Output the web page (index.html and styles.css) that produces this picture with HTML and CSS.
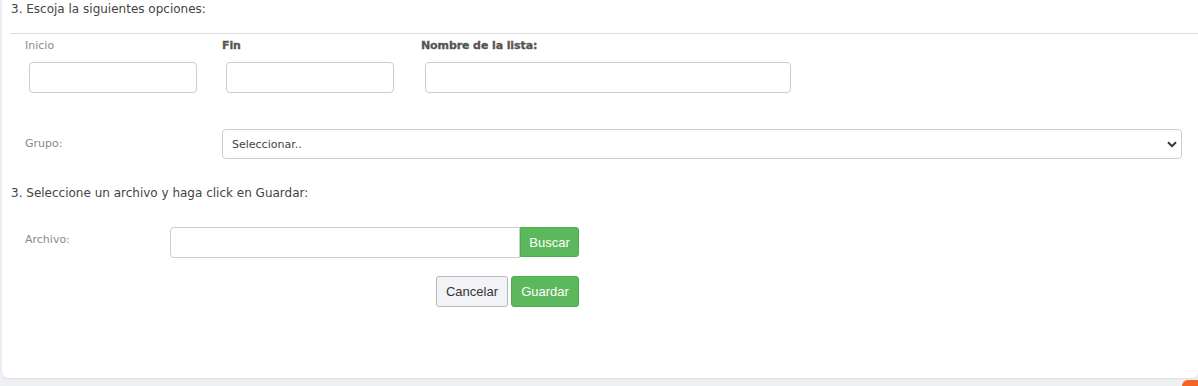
FILE: index.html
```html
<!DOCTYPE html>
<html lang="es">
<head>
    <meta charset="UTF-8">
    <meta name="viewport" content="width=device-width, initial-scale=1.0">
    <title>Cargar lista</title>
    <link rel="stylesheet" href="styles.css">
</head>
<body>
    <div class="card">
        <p class="step">3. Escoja la siguientes opciones:</p>
        <hr class="divider">

        <div class="fields">
            <div class="field">
                <label for="inicio" class="lbl">Inicio</label>
                <input type="text" id="inicio" class="box small">
            </div>
            <div class="field">
                <label for="fin" class="lbl strong">Fin</label>
                <input type="text" id="fin" class="box small">
            </div>
            <div class="field">
                <label for="nombre" class="lbl strong">Nombre de la lista:</label>
                <input type="text" id="nombre" class="box wide">
            </div>
        </div>

        <div class="row group-row">
            <label for="grupo" class="lbl row-lbl">Grupo:</label>
            <div class="select-wrap">
                <select id="grupo" class="box select">
                    <option>Seleccionar..</option>
                </select>
                <svg class="chev" width="10" height="7" viewBox="0 0 10 7"><path d="M1 1.2 L5 5.2 L9 1.2" fill="none" stroke="#333" stroke-width="2"/></svg>
            </div>
        </div>

        <p class="step step-2">3. Seleccione un archivo y haga click en Guardar:</p>

        <div class="row file-row">
            <label for="archivo" class="lbl file-lbl">Archivo:</label>
            <div class="file-box">
                <div class="file-input">
                    <input type="text" id="archivo" class="box file">
                    <button class="btn green">Buscar</button>
                </div>
                <div class="actions">
                    <button class="btn plain">Cancelar</button>
                    <button class="btn green">Guardar</button>
                </div>
            </div>
        </div>
    </div>
    <span class="corner-dot"></span>
</body>
</html>
```

FILE: styles.css
```css
body {
    margin: 0;
    background-color: #eef0f4;
    font-family: "DejaVu Sans", "Noto Sans", sans-serif;
    overflow: hidden;
    height: 386px;
    position: relative;
}
.card {
    margin-left: 2px;
    height: 378px;
    background-color: #fff;
    border-radius: 0 0 6px 6px;
    box-shadow: 0 1px 2px rgba(0, 0, 0, 0.08);
    overflow: hidden;
}
.step {
    margin: 0;
    padding: 2px 0 0 9px;
    font-size: 12px;
    line-height: 14px;
    color: #444;
}
.divider {
    border: none;
    border-top: 1px solid #dcdcdc;
    margin: 17px 0 0 8px;
}
.fields {
    display: flex;
    padding-left: 23px;
    margin-top: 5px;
}
.field {
    display: flex;
    flex-direction: column;
    align-items: flex-start;
}
.field:nth-child(1) { width: 197px; }
.field:nth-child(2) { width: 199px; }
.lbl {
    font-size: 11px;
    line-height: 14px;
    color: #8a8a8a;
}
.strong {
    font-weight: bold;
    color: #555;
    letter-spacing: -0.1px;
    -webkit-text-stroke: 0.3px #555;
}
.box {
    box-sizing: border-box;
    height: 31px;
    border: 1px solid #ccc;
    border-radius: 4px;
    background: #fff;
    margin: 9px 0 0 4px;
    font-family: inherit;
}
.small { width: 168px; }
.wide { width: 366px; }
.row {
    display: flex;
    padding-left: 23px;
}
.group-row {
    align-items: center;
    margin-top: 36px;
}
.row-lbl { width: 197px; }
.select-wrap {
    position: relative;
}
.select {
    -webkit-appearance: none;
    appearance: none;
    width: 960px;
    height: 30px;
    margin: 0;
    padding: 0 0 0 9px;
    font-size: 11px;
    color: #444;
}
.chev {
    position: absolute;
    right: 5px;
    top: 12px;
}
.step-2 {
    margin-top: 25px;
}
.file-row {
    margin-top: 27px;
    align-items: flex-start;
}
.file-lbl {
    width: 145px;
    margin-top: 6px;
}
.file-box {
    width: 409px;
}
.file-input {
    display: flex;
}
.file {
    width: 350px;
    margin: 0;
    border-radius: 4px 0 0 4px;
}
.btn {
    font-family: "Liberation Sans", Arial, sans-serif;
    font-size: 13px;
    height: 31px;
    border-radius: 3px;
    padding: 0 7px;
    cursor: pointer;
}
.green {
    background-color: #5cb85c;
    border: 1px solid #4cae4c;
    color: #fff;
}
.file-input .green {
    width: 59px;
    height: 30px;
    border-radius: 0 3px 3px 0;
    padding: 0;
}
.plain {
    background-color: #f2f3f7;
    border: 1px solid #b8b8b8;
    color: #333;
}
.actions {
    display: flex;
    justify-content: flex-end;
    gap: 3px;
    margin-top: 18px;
}
.actions .plain { width: 72px; padding: 0; }
.actions .green { width: 68px; padding: 0; }
.corner-dot {
    position: absolute;
    right: 0;
    top: 380px;
    width: 16px;
    height: 6px;
    border-radius: 16px 0 0 0;
    background-color: #f26522;
}
```
